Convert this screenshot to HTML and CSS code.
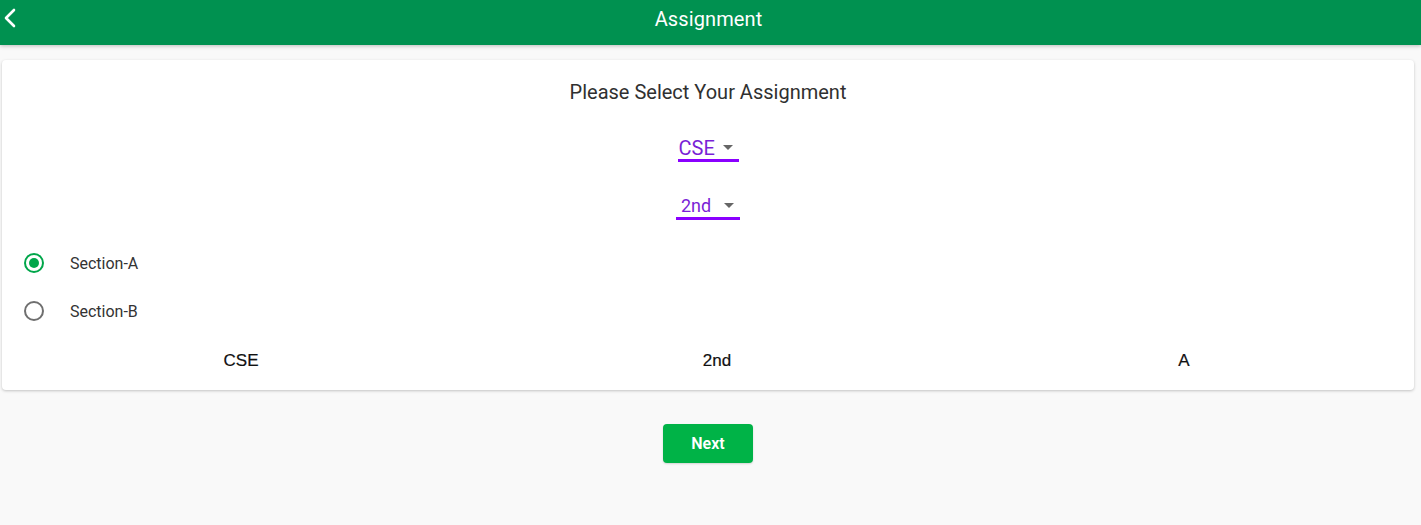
FILE: index.html
```html
<!DOCTYPE html>
<html>
<head>
<meta charset="utf-8">
<link rel="stylesheet" href="styles.css">
</head>
<body>
<header class="topbar">
  <span class="back">
    <svg width="14" height="20" viewBox="0 0 14 20"><path d="M11 2 L3 10 L11 18" fill="none" stroke="#fff" stroke-width="2.6" stroke-linecap="round" stroke-linejoin="round"/></svg>
  </span>
  <h1 class="title">Assignment</h1>
</header>
<main class="content">
  <section class="card">
    <h2 class="heading">Please Select Your Assignment</h2>
    <div class="select sel-cse"><span class="sel-text">CSE</span><span class="caret"></span></div>
    <div class="select sel-year"><span class="sel-text">2nd</span><span class="caret"></span></div>
    <div class="radios">
      <label class="radio"><span class="dot on"></span><span class="rlabel">Section-A</span></label>
      <label class="radio"><span class="dot"></span><span class="rlabel">Section-B</span></label>
    </div>
    <div class="summary">
      <span>CSE</span><span>2nd</span><span>A</span>
    </div>
  </section>
  <div class="actions"><button class="next">Next</button></div>
</main>
</body>
</html>
```
FILE: styles.css
```css
* { box-sizing: border-box; }
html, body { margin: 0; padding: 0; }
body {
  background: #f9f9f9;
  font-family: Roboto, "Liberation Sans", sans-serif;
  width: 1421px;
  height: 525px;
  overflow: hidden;
}
.topbar {
  height: 45px;
  background: #009150;
  display: flex;
  align-items: center;
  justify-content: center;
  position: relative;
  box-shadow: 0 1px 4px rgba(0,0,0,0.25);
}
.back {
  position: absolute;
  left: 3px;
  top: 8px;
  display: flex;
}
.title {
  margin: 0;
  color: #fff;
  font-size: 20px;
  font-weight: 400;
  letter-spacing: 0.1px;
  margin-top: -7px;
  margin-left: -4px;
}
.content { padding: 15px 7px 0 2px; }
.card {
  background: #fff;
  border-radius: 4px;
  box-shadow: 0 1px 3px rgba(0,0,0,0.22);
  height: 330px;
  padding-top: 19px;
  display: flex;
  flex-direction: column;
  align-items: center;
}
.heading {
  margin: 0;
  font-size: 20px;
  font-weight: 400;
  color: #303030;
  line-height: 26px;
  letter-spacing: 0;
}
.select {
  display: flex;
  align-items: center;
  border-bottom: 3px solid #8a00ff;
  height: 28px;
  padding-top: 2px;
}
.sel-cse { margin-top: 29px; width: 61px; padding-left: 1px; }
.sel-year { margin-top: 30px; width: 64px; padding-left: 5px; }
.sel-text { color: #7a1fd6; font-size: 20px; }
.sel-year .sel-text { font-size: 18px; }
.caret {
  width: 0; height: 0;
  border-left: 5px solid transparent;
  border-right: 5px solid transparent;
  border-top: 5px solid #666;
  margin-left: auto;
  margin-right: 6px;
}
.radios {
  align-self: stretch;
  display: flex;
  flex-direction: column;
  gap: 28px;
  margin-top: 33px;
  padding-left: 22px;
}
.radio { display: flex; align-items: center; height: 20px; }
.dot {
  width: 20px; height: 20px;
  border-radius: 50%;
  border: 2px solid #6f6f6f;
  position: relative;
  flex: none;
}
.dot.on { border-color: #00a64a; }
.dot.on::after {
  content: "";
  position: absolute;
  left: 3px; top: 3px;
  width: 10px; height: 10px;
  border-radius: 50%;
  background: #00a64a;
}
.rlabel { margin-left: 26px; font-size: 16px; color: #333; }
.summary {
  align-self: stretch;
  display: grid;
  grid-template-columns: 472px 480px 454px;
  margin-top: 30px;
  padding-left: 3px;
  font-family: "Liberation Sans", Arial, sans-serif;
  font-size: 17px;
  color: #111;
  text-align: center;
  -webkit-text-stroke: 0.2px #111;
}
.actions { display: flex; justify-content: center; margin-top: 34px; }
.next {
  width: 90px; height: 39px;
  background: #00b347;
  border: none;
  border-radius: 4px;
  color: #fff;
  font-family: Roboto, "Liberation Sans", sans-serif;
  font-size: 16px;
  font-weight: 600;
  box-shadow: 0 1px 2px rgba(0,0,0,0.15);
}
```
